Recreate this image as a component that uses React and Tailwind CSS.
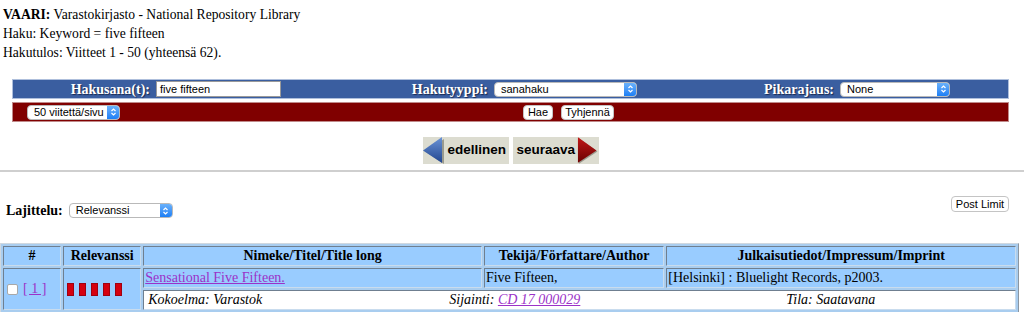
import React from 'react'

const serif = "font-['Liberation_Serif','Times_New_Roman',serif]"
const sans = "font-['Liberation_Sans',Arial,sans-serif]"

function Chevrons() {
  return (
    <svg width="7" height="10" viewBox="0 0 7 10" fill="none" stroke="white" strokeWidth="1.2">
      <path d="M1.5 4 L3.5 2 L5.5 4" />
      <path d="M1.5 6 L3.5 8 L5.5 6" />
    </svg>
  )
}

function Select({ w, children }) {
  return (
    <div className={`flex h-[15px] items-stretch rounded-[4px] border border-[#b9b9b9] bg-white ${w}`}>
      <span className={`flex-1 pl-[6px] text-[11px] leading-[13px] text-black ${sans}`}>{children}</span>
      <span className="flex w-[12px] items-center justify-center rounded-r-[3px] bg-gradient-to-b from-[#69b1fb] to-[#1b7ff5]">
        <Chevrons />
      </span>
    </div>
  )
}

function SmallButton({ w, children }) {
  return (
    <div className={`flex h-[15px] items-center justify-center rounded-[4px] border border-[#c4c4c4] bg-white text-[11px] leading-[13px] text-black ${sans} ${w}`}>
      {children}
    </div>
  )
}

function NavButton({ dir }) {
  const prev = dir === 'prev'
  return (
    <div className="flex h-[27px] w-[86px] items-center bg-[#dcdcd0]">
      {prev && (
        <svg width="22" height="27" viewBox="0 0 22 27">
          <defs>
            <linearGradient id="gb" x1="0" y1="0" x2="0" y2="1">
              <stop offset="0" stopColor="#6b93d6" />
              <stop offset="1" stopColor="#22468f" />
            </linearGradient>
          </defs>
          <polygon points="1,13.5 20,1 20,26" fill="#9a9a8e" transform="translate(1,1)" />
          <polygon points="0,13.5 19,0 19,26" fill="url(#gb)" />
        </svg>
      )}
      <span className={`text-[13.5px] font-bold text-black ${sans} ${prev ? 'ml-[3px]' : 'ml-[4px]'}`}>
        {prev ? 'edellinen' : 'seuraava'}
      </span>
      {!prev && (
        <svg width="24" height="27" viewBox="0 0 24 27" className="ml-auto">
          <defs>
            <linearGradient id="gr" x1="0" y1="0" x2="0" y2="1">
              <stop offset="0" stopColor="#c01818" />
              <stop offset="1" stopColor="#6a0000" />
            </linearGradient>
          </defs>
          <polygon points="4,1 23,14.5 4,27" fill="#9a9a8e" />
          <polygon points="3,0 22,13.5 3,26" fill="url(#gr)" />
        </svg>
      )}
    </div>
  )
}

const label = "text-[14px] font-bold text-white [text-shadow:1px_1px_1px_#1a2a50]"
const cell = 'border border-t-[#6f7f90] border-l-[#6f7f90] border-r-[#c9dcee] border-b-[#c9dcee] bg-[#99ccff] px-[1px] h-[20px] p-0 text-[14px] leading-[18px]'
const link = 'text-[#9b32c8] underline'

export default function App() {
  return (
    <div className={`h-[312px] w-[1024px] overflow-hidden bg-white text-black ${serif}`}>
      <div className="pl-[3px] pt-[5px] text-[13.6px] leading-[19px]">
        <div><b>VAARI:</b> Varastokirjasto - National Repository Library</div>
        <div>Haku: Keyword = five fifteen</div>
        <div>Hakutulos: Viitteet 1 - 50 (yhteensä 62).</div>
      </div>

      <div className="ml-[12px] mt-[17px] w-[997px]">
        <div className="flex h-[20px] items-center border border-[#aebfdc] bg-[#3a5ea0]">
          <div className={`w-[137px] text-right ${label}`}>Hakusana(t):</div>
          <div className={`ml-[6px] flex h-[16px] w-[125px] items-center border border-[#9a9a9a] bg-white pl-[3px] text-[11px] ${sans}`}>five fifteen</div>
          <div className={`w-[207px] text-right ${label}`}>Hakutyyppi:</div>
          <div className="ml-[6px]"><Select w="w-[143px]">sanahaku</Select></div>
          <div className={`w-[197px] text-right ${label}`}>Pikarajaus:</div>
          <div className="ml-[6px]"><Select w="w-[110px]">None</Select></div>
        </div>
        <div className="mt-[3px] flex h-[20px] items-center border border-[#c08a8a] bg-[#800000] pl-[14px]">
          <Select w="w-[93px]">50 viitettä/sivu</Select>
          <div className="ml-[403px]"><SmallButton w="w-[30px]">Hae</SmallButton></div>
          <div className="ml-[8px]"><SmallButton w="w-[53px]">Tyhjennä</SmallButton></div>
        </div>
      </div>

      <div className="mt-[15px] flex justify-center gap-[4px] pr-[3px]">
        <NavButton dir="prev" />
        <NavButton dir="next" />
      </div>

      <div className="mt-[6px] h-[2px] bg-[#cfcfcf]" />

      <div className="flex h-[71px] justify-between">
        <div className="flex items-center pl-[6px] pt-[31px] self-start">
          <span className="text-[14px] font-bold leading-[15px]">Lajittelu:</span>
          <div className="ml-[6px]"><Select w="w-[104px]">Relevanssi</Select></div>
        </div>
        <div className="self-start pr-[15px] pt-[24px]">
          <SmallButton w="w-[58px] h-[16px]">Post Limit</SmallButton>
        </div>
      </div>

      <table className="w-[1019px] table-fixed border-separate border-spacing-[2px] border border-t-[#d0d8e0] border-l-[#d0d8e0] border-r-[#8a96a2] border-b-[#8a96a2] bg-[#a9cdef]">
        <thead>
          <tr>
            <th className={`w-[58px] text-center font-bold ${cell}`}>#</th>
            <th className={`w-[78px] text-center font-bold ${cell}`}>Relevanssi</th>
            <th className={`w-[338px] text-center font-bold ${cell}`}>Nimeke/Titel/Title long</th>
            <th className={`w-[180px] text-center font-bold ${cell}`}>Tekijä/Författare/Author</th>
            <th className={`w-[349px] text-center font-bold ${cell}`}>Julkaisutiedot/Impressum/Imprint</th>
          </tr>
        </thead>
        <tbody>
          <tr>
            <td rowSpan={2} className={`${cell} align-middle`}>
              <div className="flex items-center pl-[2px]">
                <span className="h-[11px] w-[11px] rounded-[2px] border border-[#a8a8a8] bg-white" />
                <a className={`ml-[5px] ${link}`}>[ 1 ]</a>
              </div>
            </td>
            <td rowSpan={2} className={`${cell} align-middle`}>
              <div className="flex gap-[5px] pl-[2px]">
                {[0, 1, 2, 3, 4].map(i => (
                  <span key={i} className="h-[13px] w-[7px] border border-[#a00010] bg-[#d6000f]" />
                ))}
              </div>
            </td>
            <td className={cell}><a className={link}>Sensational Five Fifteen.</a></td>
            <td className={cell}>Five Fifteen,</td>
            <td className={cell}>[Helsinki] : Bluelight Records, p2003.</td>
          </tr>
          <tr>
            <td colSpan={3} className={`${cell} bg-white italic`}>
              <div className="grid grid-cols-[301px_337px_1fr] pl-[3px]">
                <span>Kokoelma: Varastok</span>
                <span>Sijainti: <a className={link}>CD 17 000029</a></span>
                <span>Tila: Saatavana</span>
              </div>
            </td>
          </tr>
        </tbody>
      </table>
    </div>
  )
}
